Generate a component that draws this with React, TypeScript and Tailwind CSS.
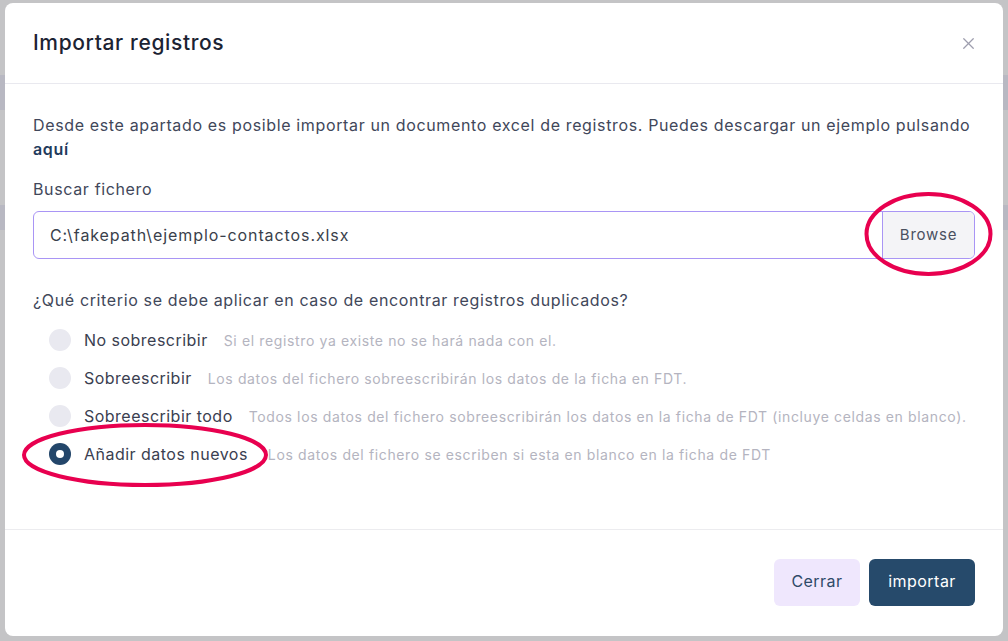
import { X } from 'lucide-react';

const options = [
  {
    label: 'No sobrescribir',
    hint: 'Si el registro ya existe no se hará nada con el.',
    checked: false,
    gap: 'ml-4',
  },
  {
    label: 'Sobreescribir',
    hint: 'Los datos del fichero sobreescribirán los datos de la ficha en FDT.',
    checked: false,
    gap: 'ml-4',
  },
  {
    label: 'Sobreescribir todo',
    hint: 'Todos los datos del fichero sobreescribirán los datos en la ficha de FDT (incluye celdas en blanco).',
    checked: false,
    gap: 'ml-4',
  },
  {
    label: 'Añadir datos nuevos',
    hint: 'Los datos del fichero se escriben si esta en blanco en la ficha de FDT',
    checked: true,
    gap: 'ml-[20px]',
  },
];

export default function App() {
  return (
    <div
      className="relative h-[641px] w-full overflow-hidden bg-[#c4c4c6] pb-[5px] pl-[5px] pr-[5px] pt-[3px]"
      style={{ fontFamily: 'Inter, "Open Sans", sans-serif' }}
    >
      {/* dimmed page behind the modal */}
      <div className="absolute left-0 top-[75px] h-[35px] w-[5px] bg-[#b8b8c2]" />
      <div className="absolute left-0 top-[205px] h-[25px] w-[5px] bg-[#b8b8c2]" />
      <div className="absolute right-0 top-[75px] h-[35px] w-[5px] bg-[#b8b8c2]" />
      <div className="absolute right-0 top-[205px] h-[25px] w-[5px] bg-[#b8b8c2]" />

      <div className="relative flex h-full flex-col rounded-lg bg-white">
        <header className="flex h-[81px] items-center justify-between border-b border-[#e9e9ef] pl-[28px] pr-[25px]">
          <h1 className="text-[21px] font-medium tracking-[0.03em] text-[#1c2333]">Importar registros</h1>
          <button className="text-[#9e9eae]">
            <X size={19} strokeWidth={1.6} />
          </button>
        </header>

        <section className="flex flex-1 flex-col px-[28px] pt-[29px]">
          <p className="text-[16px] leading-6 tracking-[0.04em] text-[#41475a]">
            Desde este apartado es posible importar un documento excel de registros. Puedes descargar un ejemplo pulsando{' '}
            <a className="font-semibold text-[#1f3b5c]">aquí</a>
          </p>

          <label className="mt-[16px] text-[16px] leading-6 tracking-[0.04em] text-[#41475a]">Buscar fichero</label>
          <div className="mt-[10px] flex h-[48px] overflow-hidden rounded-md border border-[#a995f5]">
            <div className="flex flex-1 items-center pl-[16px] text-[16px] tracking-[0.057em] text-[#3a3f4b]">
              C:\fakepath\ejemplo-contactos.xlsx
            </div>
            <button className="w-[92px] border-l border-[#a995f5] bg-[#f4f4f7] text-[15px] tracking-[0.05em] text-[#4a5060]">
              Browse
            </button>
          </div>

          <p className="mt-[29px] text-[16px] leading-6 tracking-[0.04em] text-[#41475a]">
            ¿Qué criterio se debe aplicar en caso de encontrar registros duplicados?
          </p>

          <ul className="mt-[9px] flex flex-col pl-4">
            {options.map((o) => (
              <li key={o.label} className="flex h-[38px] items-center">
                {o.checked ? (
                  <span className="flex h-[22px] w-[22px] items-center justify-center rounded-full bg-[#23466a]">
                    <span className="h-[8px] w-[8px] rounded-full bg-white" />
                  </span>
                ) : (
                  <span className="h-[22px] w-[22px] rounded-full bg-[#e9e9f0]" />
                )}
                <span className="ml-[13px] text-[16px] tracking-[0.03em] text-[#3a4050]">{o.label}</span>
                <span className={`${o.gap} text-[14px] tracking-[0.045em] text-[#b4b4c0]`}>{o.hint}</span>
              </li>
            ))}
          </ul>
        </section>

        <footer className="flex items-center justify-end gap-[9px] border-t border-[#ececef] px-[28px] pb-[30px] pt-[29px]">
          <button className="h-[47px] w-[86px] rounded-md bg-[#efe7fd] pb-[3px] text-[16px] tracking-[0.03em] text-[#2e4a68]">
            Cerrar
          </button>
          <button className="h-[47px] w-[106px] rounded-md bg-[#264a6b] pb-[3px] text-[16px] tracking-[0.03em] text-white">
            importar
          </button>
        </footer>
      </div>

      {/* hand-drawn highlight marks over the screenshot */}
      <svg className="pointer-events-none absolute inset-0" width="1008" height="641">
        <ellipse cx="928.5" cy="234" rx="62" ry="40" fill="none" stroke="#e8004f" strokeWidth="4" />
        <ellipse cx="145" cy="455" rx="121" ry="30" fill="none" stroke="#e8004f" strokeWidth="4" />
      </svg>
    </div>
  );
}
